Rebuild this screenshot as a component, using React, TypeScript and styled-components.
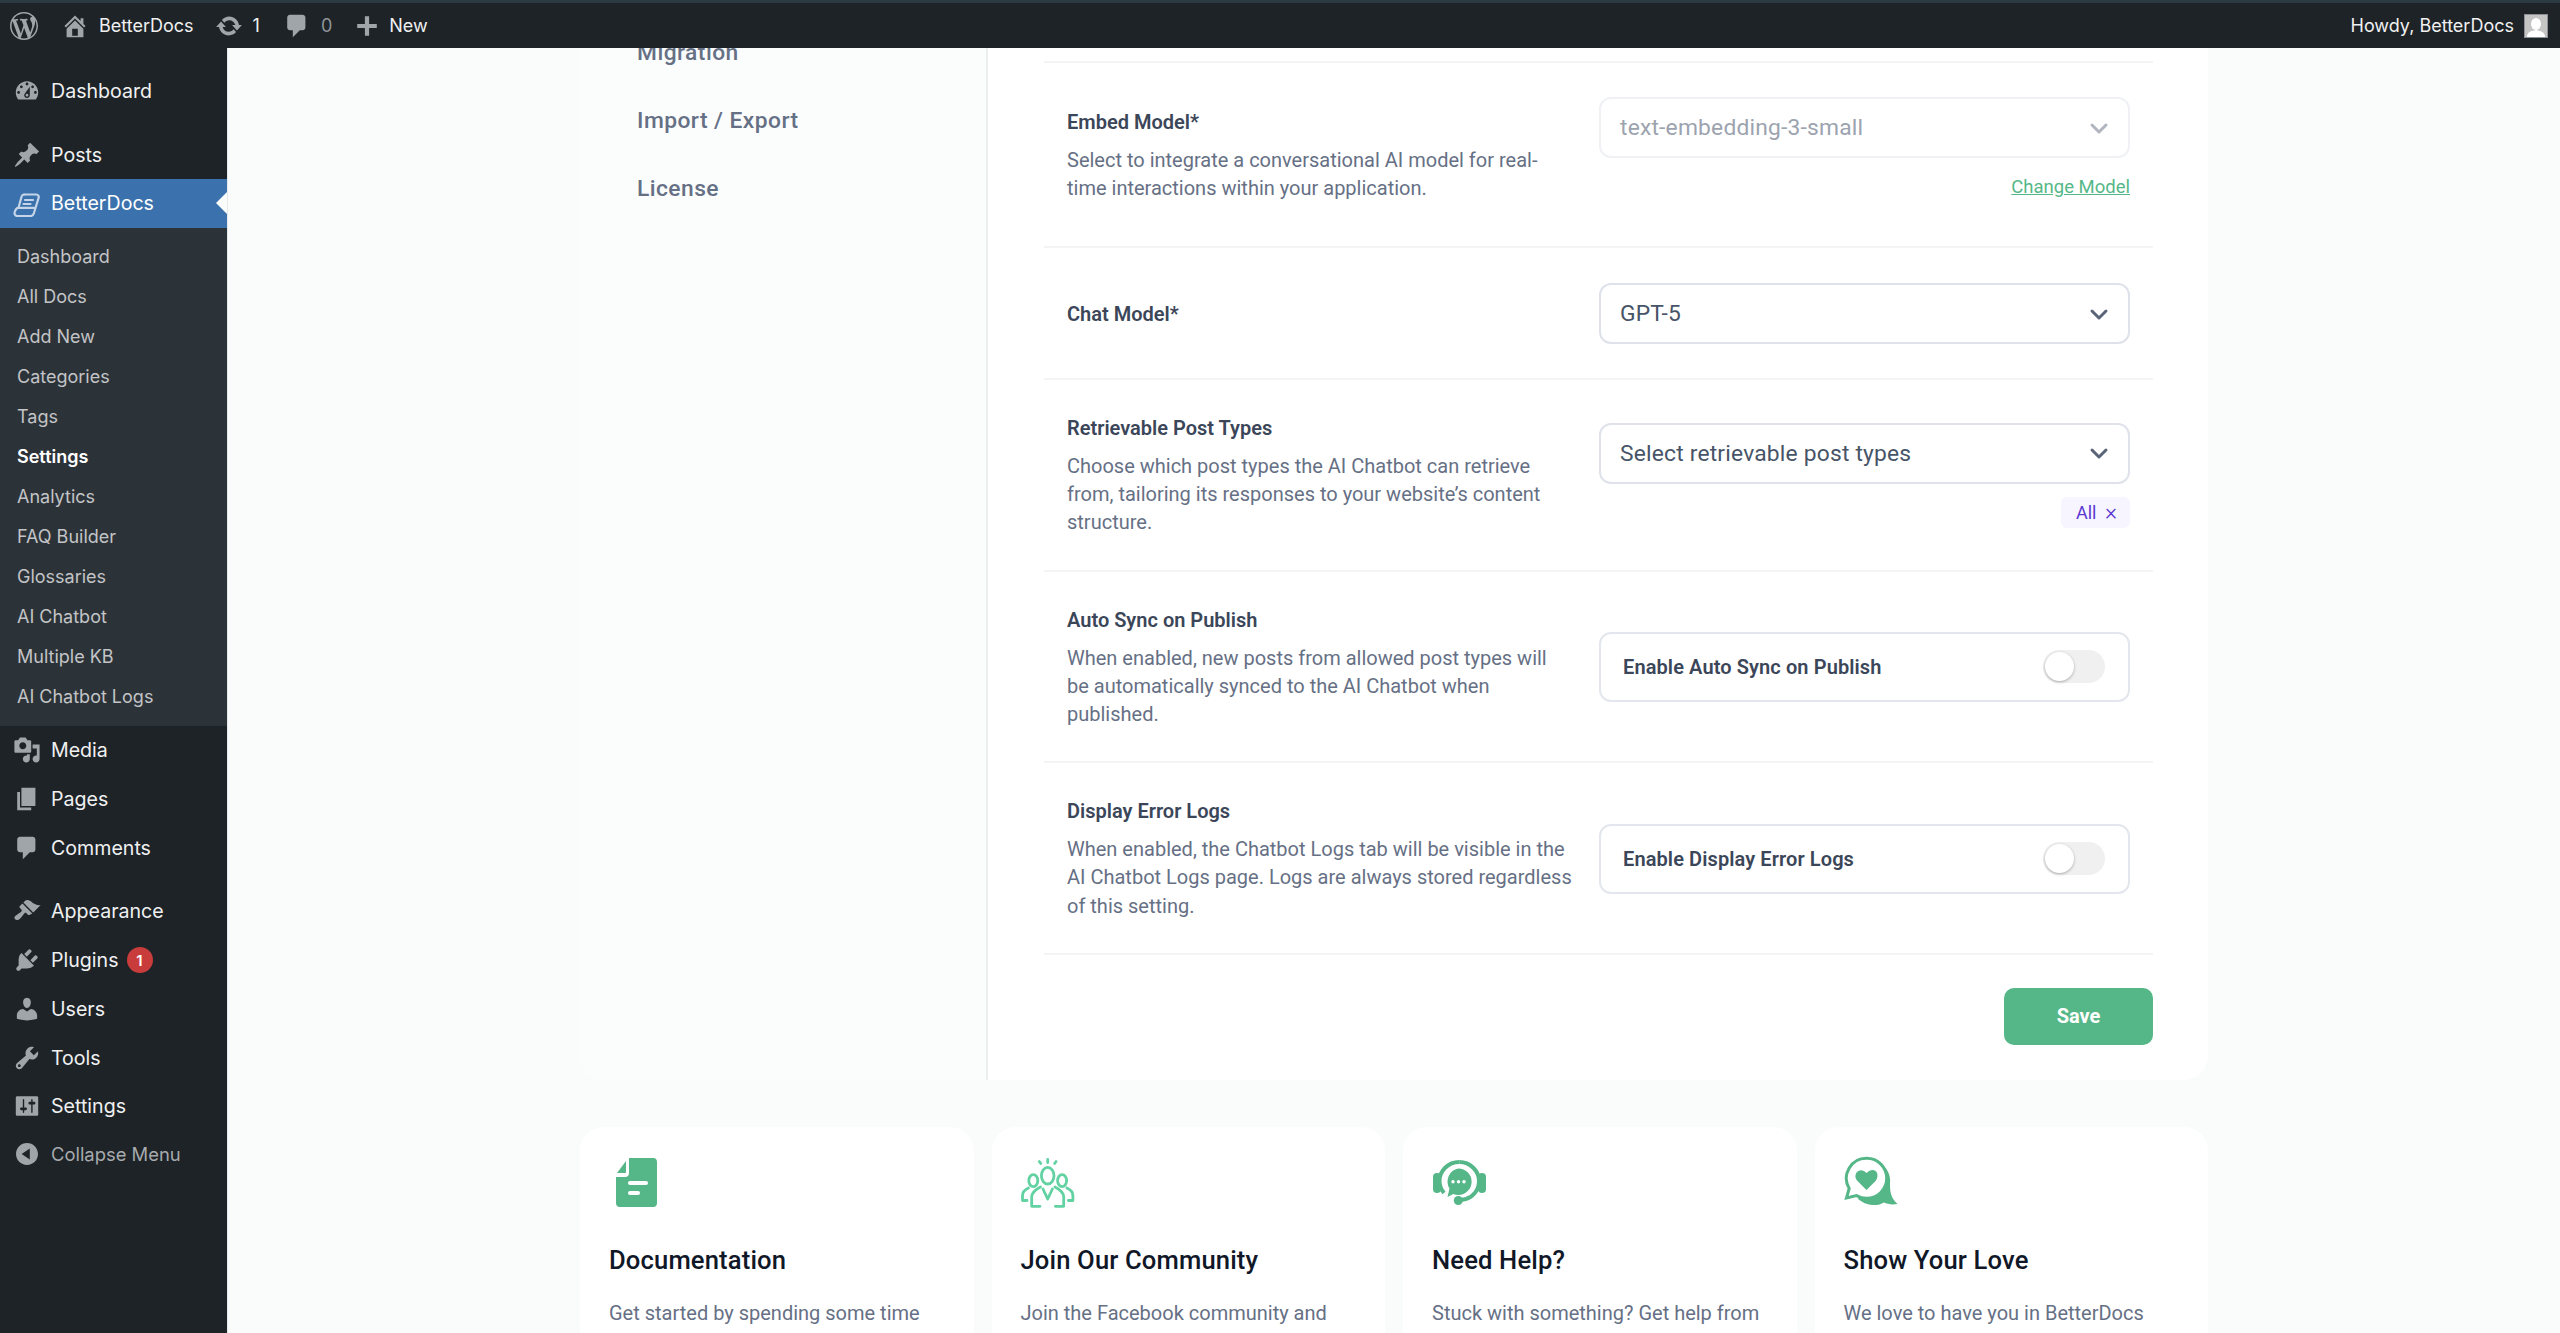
import React from 'react'
import styled, { createGlobalStyle } from 'styled-components'
import type { FC, ReactNode } from 'react'

const WP_FONT = '"Inter", "Liberation Sans", sans-serif'
const UI_FONT = '"Roboto", "Noto Sans", sans-serif'
const GREEN = '#55b788'

const GlobalStyle = createGlobalStyle`
  html, body {
    margin: 0;
    height: 100%;
    overflow: hidden;
    background: #fafcfb;
  }
  * {
    box-sizing: border-box;
  }
`

const Shell = styled.div`
  display: flex;
  flex-direction: column;
  height: 100vh;
  font-family: ${UI_FONT};
`

const AdminBar = styled.header`
  display: flex;
  align-items: center;
  flex: none;
  height: 48px;
  padding: 0 12px 0 10px;
  background: #1d2327;
  border-top: 3px solid #2b3a41;
  font-family: ${WP_FONT};
  font-size: 18px;
  color: #f0f0f1;
  position: relative;
  z-index: 2;
  svg {
    color: #a0a5aa;
  }
`

const BarItem = styled.div<{ $ml: number; $gap?: number; $dim?: boolean }>`
  display: flex;
  align-items: center;
  gap: ${({ $gap }) => $gap ?? 12}px;
  margin-left: ${({ $ml }) => $ml}px;
  color: ${({ $dim }) => ($dim ? '#8f9499' : '#f0f0f1')};
`

const BarSpacer = styled.div`
  flex: 1;
`

const Avatar = styled.div`
  width: 24px;
  height: 24px;
  background: #c4c4c4;
  border: 1px solid #8c8f94;
  overflow: hidden;
  display: flex;
  svg {
    color: #fff;
  }
`

const Body = styled.div`
  display: flex;
  flex: 1;
  min-height: 0;
`

const Sidebar = styled.nav`
  flex: none;
  width: 228px;
  background: #1d2327;
  border-right: 1px solid #e6e9ea;
  padding-top: 18.5px;
  font-family: ${WP_FONT};
`

const MenuItem = styled.div<{ $gapAfter?: boolean; $muted?: boolean; $active?: boolean }>`
  position: relative;
  display: flex;
  align-items: center;
  gap: 10px;
  height: ${({ $muted }) => ($muted ? 47 : 48.75)}px;
  padding-left: 13px;
  font-size: ${({ $muted }) => ($muted ? 18.4 : 19.6)}px;
  margin-bottom: ${({ $gapAfter }) => ($gapAfter ? 15 : 0)}px;
  color: ${({ $muted, $active }) => ($active ? '#fff' : $muted ? '#a7aaad' : '#f0f0f1')};
  background: ${({ $active }) => ($active ? '#3b72ad' : 'transparent')};
  svg {
    flex: none;
    color: ${({ $active }) => ($active ? '#c5d4e8' : '#a0a5aa')};
  }
  ${({ $active }) =>
    $active &&
    `
    &::after {
      content: '';
      position: absolute;
      right: 0;
      top: 50%;
      margin-top: -11px;
      border: 11px solid transparent;
      border-right-color: #fafcfb;
      border-left-width: 0;
    }
  `}
`

const Badge = styled.span`
  display: inline-flex;
  align-items: center;
  justify-content: center;
  width: 26px;
  height: 26px;
  margin-left: -2px;
  border-radius: 50%;
  background: #c93c3c;
  color: #fff;
  font-size: 15px;
  font-weight: 600;
`

const SubMenu = styled.div`
  padding: 9px 0 9px 17px;
  background: #2c3338;
`

const SubItem = styled.div<{ $current?: boolean }>`
  height: 40px;
  line-height: 40px;
  font-size: 18px;
  font-weight: ${({ $current }) => ($current ? 600 : 400)};
  color: ${({ $current }) => ($current ? '#fff' : '#c3c4c7')};
`

const Main = styled.main`
  flex: 1;
  min-width: 0;
  overflow: hidden;
  display: flex;
  flex-direction: column;
  align-items: center;
  background: #fafcfb;
`

const Panel = styled.section`
  display: grid;
  grid-template-columns: 408px 1fr;
  flex: none;
  width: 1628px;
  margin-top: -100px;
  border-radius: 0 0 24px 24px;
  overflow: hidden;
  background: #fff;
`

const SettingsNav = styled.div`
  padding: 71px 0 0 57px;
  background: #fbfdfd;
  border-right: 2px solid #eceef0;
`

const NavLink = styled.div`
  height: 68px;
  line-height: 68px;
  font-size: 22.8px;
  font-weight: 500;
  letter-spacing: 0.45px;
  color: #667085;
`

const SettingsForm = styled.div`
  padding: 113px 55px 35px 56px;
`

const Row = styled.div`
  display: grid;
  grid-template-columns: 510px 531px;
  justify-content: space-between;
  align-items: center;
  min-height: 132px;
  padding: 34px 23px 33px;
  border-top: 2px solid #f2f4f6;
`

const RowEnd = styled.div`
  border-top: 2px solid #f2f4f6;
  display: flex;
  justify-content: flex-end;
  padding-top: 33px;
`

const FieldLabel = styled.div`
  font-size: 20px;
  line-height: 28px;
  font-weight: 600;
  color: #3b4659;
`

const Hint = styled.p`
  margin: 10px 0 0;
  max-width: 505.5px;
  font-size: 20px;
  line-height: 28.2px;
  color: #667085;
`

const Control = styled.div`
  display: flex;
  flex-direction: column;
  align-items: flex-end;
`

const Select = styled.div<{ $disabled?: boolean }>`
  display: flex;
  align-items: center;
  justify-content: space-between;
  width: 100%;
  height: 61px;
  padding: 0 17px 0 19px;
  border: 2px solid ${({ $disabled }) => ($disabled ? '#eff1f4' : '#dfe2ea')};
  border-radius: 12px;
  background: #fff;
  font-size: 22.8px;
  letter-spacing: 0.2px;
  color: ${({ $disabled }) => ($disabled ? '#9ca3af' : '#475467')};
  svg {
    color: ${({ $disabled }) => ($disabled ? '#b0b5c0' : '#5a6478')};
  }
`

const ChangeLink = styled.a`
  margin: 18px 0 15px;
  font-size: 18.5px;
  line-height: 22px;
  color: ${GREEN};
  text-decoration: underline;
`

const Tag = styled.span`
  display: flex;
  align-items: center;
  justify-content: space-between;
  width: 69px;
  height: 31px;
  margin-top: 13px;
  padding: 0 13px 0 15px;
  border-radius: 6px;
  background: #f7f5ff;
  font-size: 18px;
  color: #5b38d0;
`

const TagClose = styled.span`
  font-size: 23px;
  font-weight: 300;
  line-height: 1;
`

const ToggleBox = styled.div`
  display: flex;
  align-items: center;
  justify-content: space-between;
  height: 70px;
  padding: 0 23px 0 22px;
  border: 2px solid #e3e6ec;
  border-radius: 12px;
  font-size: 20px;
  font-weight: 600;
  letter-spacing: 0.1px;
  color: #3b4659;
`

const ToggleTrack = styled.div`
  display: flex;
  align-items: center;
  width: 62px;
  height: 33px;
  padding: 0 2px;
  border-radius: 17px;
  background: #f0f0f0;
`

const ToggleKnob = styled.div`
  width: 29px;
  height: 29px;
  border-radius: 50%;
  background: #fff;
  box-shadow: 0 1px 3px rgba(0, 0, 0, 0.3);
`

const SaveButton = styled.button`
  width: 149px;
  height: 57px;
  border: 0;
  border-radius: 10px;
  background: ${GREEN};
  color: #fff;
  font-family: ${UI_FONT};
  font-size: 20px;
  font-weight: 700;
`

const Cards = styled.div`
  display: grid;
  grid-template-columns: repeat(4, 1fr);
  gap: 18px;
  flex: none;
  width: 1628px;
  margin-top: 47px;
`

const Card = styled.article`
  height: 300px;
  padding: 29px 29px 0;
  border-radius: 24px;
  background: #fff;
`

const CardIcon = styled.div<{ $left: number }>`
  display: flex;
  align-items: center;
  height: 54px;
  padding-left: ${({ $left }) => $left}px;
`

const CardTitle = styled.h3`
  margin: 33px 0 0;
  font-size: 25.6px;
  line-height: 34px;
  font-weight: 500;
  letter-spacing: 0.15px;
  color: #101828;
`

const CardText = styled.p`
  margin: 22px 0 0;
  font-size: 20px;
  line-height: 29px;
  color: #667085;
`

const Dash: FC<{ d: string; size?: number }> = ({ d, size = 28 }) => (
  <svg width={size} height={size} viewBox="0 0 20 20" fill="currentColor">
    <path d={d} />
  </svg>
)

const ICONS = {
  wp: 'M20 10c0-5.51-4.49-10-10-10C4.48 0 0 4.49 0 10c0 5.52 4.48 10 10 10 5.51 0 10-4.48 10-10zM7.78 15.37L4.37 6.22c.55-.02 1.17-.08 1.17-.08.5-.06.44-1.13-.06-1.11 0 0-1.45.11-2.37.11-.18 0-.37 0-.58-.01C4.12 2.69 6.87 1.11 10 1.11c2.33 0 4.45.87 6.05 2.34-.68-.11-1.65.39-1.65 1.58 0 .74.45 1.36.9 2.1.35.61.55 1.36.55 2.46 0 1.49-1.4 5-1.4 5l-3.03-8.37c.54-.02.82-.17.82-.17.5-.05.44-1.25-.06-1.22 0 0-1.44.12-2.38.12-.87 0-2.33-.12-2.33-.12-.5-.03-.56 1.2-.06 1.22l.92.08 1.26 3.41zM17.41 10c.24-.64.74-1.87.43-4.25.7 1.29 1.05 2.71 1.05 4.25 0 3.29-1.73 6.24-4.4 7.78.97-2.59 1.94-5.2 2.92-7.78zM6.1 18.09C3.12 16.65 1.11 13.53 1.11 10c0-1.3.23-2.48.72-3.59C3.25 10.3 4.67 14.2 6.1 18.09zm4.03-6.63l2.58 6.98c-.86.29-1.76.45-2.71.45-.79 0-1.57-.11-2.29-.33.81-2.38 1.62-4.74 2.42-7.1z',
  home: 'M16 8.5l1.53 1.53-1.06 1.06L10 4.62l-6.47 6.47-1.06-1.06L10 2.5l4 4v-2h2v4zm-6-2.46l6 5.99V18H4v-5.97zM12 17v-5H8v5h4z',
  update: 'M10.2 3.28c3.53 0 6.43 2.61 6.92 6h2.08l-3.5 4-3.5-4h2.32c-.45-1.97-2.21-3.45-4.32-3.45-1.45 0-2.73.71-3.54 1.78L4.95 5.66C6.23 4.2 8.11 3.28 10.2 3.28zm-.4 13.44c-3.52 0-6.43-2.61-6.92-6H.8l3.5-4c1.17 1.33 2.33 2.67 3.5 4H5.48c.45 1.97 2.21 3.45 4.32 3.45 1.45 0 2.73-.71 3.54-1.78l1.71 1.95c-1.28 1.46-3.15 2.38-5.25 2.38z',
  comment: 'M5 2h9c1.1 0 2 .9 2 2v7c0 1.1-.9 2-2 2h-2l-5 5v-5H5c-1.1 0-2-.9-2-2V4c0-1.1.9-2 2-2z',
  plus: 'M17 8.5v3h-5.5V17h-3v-5.5H3v-3h5.5V3h3v5.5H17z',
  dashboard: 'M3.76 16h12.48c1.1-1.37 1.76-3.11 1.76-5 0-4.42-3.58-8-8-8s-8 3.58-8 8c0 1.89.66 3.63 1.76 5zM10 4c.55 0 1 .45 1 1s-.45 1-1 1-1-.45-1-1 .45-1 1-1zM6 6c.55 0 1 .45 1 1s-.45 1-1 1-1-.45-1-1 .45-1 1-1zm8 0c.55 0 1 .45 1 1s-.45 1-1 1-1-.45-1-1 .45-1 1-1zm-5.37 5.55L12 7v6c0 1.1-.9 2-2 2s-2-.9-2-2c0-.57.24-1.08.63-1.45zM4 10c.55 0 1 .45 1 1s-.45 1-1 1-1-.45-1-1 .45-1 1-1zm12 0c.55 0 1 .45 1 1s-.45 1-1 1-1-.45-1-1 .45-1 1-1zm-5 3c0-.55-.45-1-1-1s-1 .45-1 1 .45 1 1 1 1-.45 1-1z',
  posts: 'M10.44 3.02l1.82-1.82 6.36 6.35-1.83 1.82c-1.05-.68-2.48-.57-3.41.36l-.75.75c-.92.93-1.04 2.35-.35 3.41l-1.83 1.82-2.41-2.41-2.8 2.79c-.42.42-3.38 2.71-3.8 2.29s1.86-3.39 2.28-3.81l2.79-2.79L4.1 9.36l1.83-1.82c1.05.69 2.48.57 3.4-.36l.75-.75c.93-.92 1.05-2.35.36-3.41z',
  media: 'M13 11V4c0-.55-.45-1-1-1h-1.67L9 1H5L3.67 3H2c-.55 0-1 .45-1 1v7c0 .55.45 1 1 1h10c.55 0 1-.45 1-1zM7 4.5c1.38 0 2.5 1.12 2.5 2.5S8.38 9.5 7 9.5 4.5 8.38 4.5 7 5.62 4.5 7 4.5zM14 6h5v10.5c0 1.38-1.12 2.5-2.5 2.5S14 17.88 14 16.5s1.12-2.5 2.5-2.5c.17 0 .34.02.5.05V9h-3V6zm-4 8.05V13h2v3.5c0 1.38-1.12 2.5-2.5 2.5S7 17.88 7 16.5 8.12 14 9.5 14c.17 0 .34.02.5.05z',
  pages: 'M6 15V2h10v13H6zm-1 1h8v2H3V5h2v11z',
  appearance: 'M14.48 11.06L7.41 3.99l1.5-1.5c.5-.56 2.3-.47 3.51.32 1.21.8 1.43 1.28 2.91 2.1 1.18.64 2.45 1.26 4.45.85zm-.71.71L6.7 4.7 4.93 6.47c-.39.39-.39 1.02 0 1.41l1.06 1.06c.39.39.39 1.03 0 1.42-.6.6-1.43 1.11-2.21 1.69-.35.26-.7.53-1.01.84C1.43 13.23.4 14.8 1.57 15.98c1.17 1.17 2.75.14 4.08-1.19.31-.31.58-.66.85-1.01.58-.78 1.09-1.61 1.69-2.21.39-.39 1.02-.39 1.41 0l1.06 1.06c.39.39 1.02.39 1.41 0z',
  plugins: 'M13.11 4.36L9.87 7.6 8 5.73l3.24-3.24c.35-.34 1.05-.2 1.56.32.52.51.66 1.21.31 1.55zm-8 1.77l.91-1.12 9.01 9.01-1.19.84c-.71.71-2.63 1.16-3.82 1.16H6.14L4.9 17.26c-.59.59-1.54.59-2.12 0-.59-.58-.59-1.53 0-2.12l1.24-1.24v-3.88c0-1.13.4-3.19 1.09-3.89zm7.26 3.97l3.24-3.24c.34-.35 1.04-.21 1.55.31.52.51.66 1.21.31 1.55l-3.24 3.25z',
  users: 'M10 9.25c-2.27 0-2.73-3.44-2.73-3.44C7 4.02 7.82 2 9.97 2c2.16 0 2.98 2.02 2.71 3.81 0 0-.41 3.44-2.68 3.44zm0 2.57L12.72 10c2.39 0 4.52 2.33 4.52 4.53v2.49s-3.65 1.13-7.24 1.13c-3.65 0-7.24-1.13-7.24-1.13v-2.49c0-2.25 1.94-4.48 4.47-4.48z',
  tools: 'M16.68 9.77c-1.34 1.34-3.3 1.67-4.95.99l-5.41 6.52c-.99.99-2.59.99-3.58 0s-.99-2.59 0-3.57l6.52-5.42c-.68-1.65-.35-3.61.99-4.95 1.28-1.28 3.12-1.62 4.72-1.06l-2.89 2.89 2.82 2.82 2.86-2.87c.53 1.58.18 3.39-1.08 4.65zM3.81 16.21c.4.39 1.04.39 1.43 0 .4-.4.4-1.04 0-1.43-.39-.4-1.03-.4-1.43 0-.39.39-.39 1.03 0 1.43z',
  settings: 'M18 16V4c0-.55-.45-1-1-1H3c-.55 0-1 .45-1 1v12c0 .55.45 1 1 1h14c.55 0 1-.45 1-1zM8 11h1c.55 0 1 .45 1 1s-.45 1-1 1H8v1.5c0 .28-.22.5-.5.5s-.5-.22-.5-.5V13H6c-.55 0-1-.45-1-1s.45-1 1-1h1V5.5c0-.28.22-.5.5-.5s.5.22.5.5V11zm5-2h-1c-.55 0-1-.45-1-1s.45-1 1-1h1V5.5c0-.28.22-.5.5-.5s.5.22.5.5V7h1c.55 0 1 .45 1 1s-.45 1-1 1h-1v5.5c0 .28-.22.5-.5.5s-.5-.22-.5-.5V9z',
  collapse: 'M10 2.16c4.33 0 7.84 3.51 7.84 7.84s-3.51 7.84-7.84 7.84S2.16 14.33 2.16 10 5.71 2.16 10 2.16zm2 11.72V6.12L6.18 9.97z',
}

const BetterDocsIcon = () => (
  <svg width="28" height="28" viewBox="0 0 28 28" fill="none" stroke="currentColor" strokeWidth="2.2" strokeLinecap="round">
    <path d="M11 5.500h12.300a2.500 2.500 0 0 1 2.300 3.400l-4.800 15.600A3.500 3.500 0 0 1 17.400 27H4.500a3 3 0 0 1-2.700-4.300l1-2.200a3 3 0 0 1 2.700-1.700H21" />
    <path d="M11 5.500a2.500 2.500 0 0 0-2.300 1.800L5.500 18.800" />
    <path d="M12 11h8M10.500 15h7" />
  </svg>
)

const Chevron = () => (
  <svg width="24" height="24" viewBox="0 0 24 24" fill="none" stroke="currentColor" strokeWidth="3" strokeLinecap="round" strokeLinejoin="round">
    <path d="M5 9l7 7 7-7" />
  </svg>
)

const DocIcon = () => (
  <svg width="41" height="49" viewBox="0 0 41 49" fill={GREEN}>
    <path d="M13 0h24a4 4 0 0 1 4 4v41a4 4 0 0 1-4 4H4a4 4 0 0 1-4-4V19h9a4 4 0 0 0 4-4z" />
    <path d="M10 3v11a1 1 0 0 1-1 1H1z" />
    <rect x="12" y="23" width="20" height="4" rx="2" fill="#fff" />
    <rect x="12" y="33" width="12" height="4" rx="2" fill="#fff" />
  </svg>
)

const CommunityIcon = () => (
  <svg width="54" height="50" viewBox="0 0 54 50" fill="none" stroke="#62d2a2" strokeWidth="2.800" strokeLinecap="round" strokeLinejoin="round">
    <path d="M26.700 1.500v3M18.300 3.500l1.500 2M35.100 3.500l-1.500 2" />
    <ellipse cx="26.700" cy="17.700" rx="6.300" ry="8.300" />
    <ellipse cx="12.300" cy="22.700" rx="4.500" ry="6" />
    <ellipse cx="41.100" cy="22.700" rx="4.500" ry="6" />
    <path d="M19.500 29c-4 2-8.800 5-8.800 10v9.300H19M33.900 29c4 2 8.800 5 8.800 10v9.300h-8.300" />
    <path d="M22 31l4.700 10 4.700-10" />
    <path d="M7.500 30C4 31.500 1.500 34 1.500 38v4.500H6M45.900 30c3.500 1.500 6 4 6 8v4.500h-4.500" />
  </svg>
)

const HelpIcon = () => (
  <svg width="55" height="46" viewBox="0 0 55 46" fill="none">
    <path d="M27.300 2C16 2 7.500 11 7.500 21c0 5 2 9 4.500 12" stroke={GREEN} strokeWidth="4" />
    <path d="M27.300 2c11 0 19.700 9 19.700 19 0 9-6 16-13 18l-5 1" stroke={GREEN} strokeWidth="4" />
    <rect x="1" y="13" width="8" height="20" rx="4" fill={GREEN} />
    <rect x="46" y="13" width="8" height="20" rx="4" fill={GREEN} />
    <circle cx="26.300" cy="40.500" r="4.500" fill={GREEN} />
    <path d="M26.300 8.400a13.300 13.300 0 1 1 0 26.600c-1.800 0-3.500-.4-5-1L15.500 37l2-8.500A13.300 13.300 0 0 1 26.300 8.400z" fill={GREEN} />
    <circle cx="21" cy="21.700" r="1.700" fill="#fff" />
    <circle cx="26.500" cy="21.700" r="1.700" fill="#fff" />
    <circle cx="32" cy="21.700" r="1.700" fill="#fff" />
  </svg>
)

const LoveIcon = () => (
  <svg width="54" height="54" viewBox="0 0 54 54">
    <path d="M32 6c12 4 15 14 14 22 0 8 1 14 7.500 20-5.500 1-10.500 0-13.500-1.500-6 3.500-16 4.500-26-3.500z" fill={GREEN} />
    <path d="M22.700 2.300a20 20 0 0 1 0 40c-3.700 0-7.200-1-10.200-2.700L2.500 42l2.700-9.500A20 20 0 0 1 22.700 2.300z" fill="#fff" stroke={GREEN} strokeWidth="3" />
    <path d="M22.500 34L13 24.500C8 18 16 10 22.500 17c6.500-7 14.500-1 9.500 7.500z" fill={GREEN} />
  </svg>
)

const AvatarFigure = () => (
  <svg width="22" height="22" viewBox="0 0 22 22" fill="currentColor">
    <ellipse cx="11" cy="9" rx="5" ry="6" />
    <path d="M2 22c0-5 4-6 9-7 5 1 9 2 9 7z" />
  </svg>
)

const SUB_ITEMS = ['Dashboard', 'All Docs', 'Add New', 'Categories', 'Tags', 'Settings', 'Analytics', 'FAQ Builder', 'Glossaries', 'AI Chatbot', 'Multiple KB', 'AI Chatbot Logs']

const CARDS: Array<{ title: string; text: string; left: number; icon: ReactNode }> = [
  { title: 'Documentation', text: 'Get started by spending some time with the documentation to get familiar with BetterDocs.', left: 7, icon: <DocIcon /> },
  { title: 'Join Our Community', text: 'Join the Facebook community and discuss with fellow developers and users.', left: 0, icon: <CommunityIcon /> },
  { title: 'Need Help?', text: 'Stuck with something? Get help from live chat or support ticket.', left: 0, icon: <HelpIcon /> },
  { title: 'Show Your Love', text: 'We love to have you in BetterDocs family. Show your love with a rating.', left: 0, icon: <LoveIcon /> },
]

const App: FC = () => (
  <Shell>
    <GlobalStyle />
    <AdminBar>
      <Dash d={ICONS.wp} />
      <BarItem $ml={23} $gap={10}><Dash d={ICONS.home} />BetterDocs</BarItem>
      <BarItem $ml={21} $gap={10}><Dash d={ICONS.update} />1</BarItem>
      <BarItem $ml={23} $gap={10} $dim><Dash d={ICONS.comment} />0</BarItem>
      <BarItem $ml={21} $gap={8}><Dash d={ICONS.plus} />New</BarItem>
      <BarSpacer />
      <BarItem $ml={0} $gap={10}>
        Howdy, BetterDocs
        <Avatar><AvatarFigure /></Avatar>
      </BarItem>
    </AdminBar>
    <Body>
      <Sidebar>
        <MenuItem $gapAfter><Dash d={ICONS.dashboard} />Dashboard</MenuItem>
        <MenuItem><Dash d={ICONS.posts} />Posts</MenuItem>
        <MenuItem $active><BetterDocsIcon />BetterDocs</MenuItem>
        <SubMenu>
          {SUB_ITEMS.map((item, i) => (
            <SubItem key={i} $current={i === 5}>{item}</SubItem>
          ))}
        </SubMenu>
        <MenuItem><Dash d={ICONS.media} />Media</MenuItem>
        <MenuItem><Dash d={ICONS.pages} />Pages</MenuItem>
        <MenuItem $gapAfter><Dash d={ICONS.comment} />Comments</MenuItem>
        <MenuItem><Dash d={ICONS.appearance} />Appearance</MenuItem>
        <MenuItem><Dash d={ICONS.plugins} />Plugins<Badge>1</Badge></MenuItem>
        <MenuItem><Dash d={ICONS.users} />Users</MenuItem>
        <MenuItem><Dash d={ICONS.tools} />Tools</MenuItem>
        <MenuItem><Dash d={ICONS.settings} />Settings</MenuItem>
        <MenuItem $muted><Dash d={ICONS.collapse} />Collapse Menu</MenuItem>
      </Sidebar>
      <Main>
        <Panel>
          <SettingsNav>
            <NavLink>Migration</NavLink>
            <NavLink>Import / Export</NavLink>
            <NavLink>License</NavLink>
          </SettingsNav>
          <SettingsForm>
            <Row>
              <div>
                <FieldLabel>Embed Model*</FieldLabel>
                <Hint>Select to integrate a conversational AI model for real-time interactions within your application.</Hint>
              </div>
              <Control>
                <Select $disabled>text-embedding-3-small<Chevron /></Select>
                <ChangeLink>Change Model</ChangeLink>
              </Control>
            </Row>
            <Row>
              <FieldLabel>Chat Model*</FieldLabel>
              <Control>
                <Select>GPT-5<Chevron /></Select>
              </Control>
            </Row>
            <Row>
              <div>
                <FieldLabel>Retrievable Post Types</FieldLabel>
                <Hint>Choose which post types the AI Chatbot can retrieve from, tailoring its responses to your website’s content structure.</Hint>
              </div>
              <Control>
                <Select>Select retrievable post types<Chevron /></Select>
                <Tag>All<TagClose>×</TagClose></Tag>
              </Control>
            </Row>
            <Row>
              <div>
                <FieldLabel>Auto Sync on Publish</FieldLabel>
                <Hint>When enabled, new posts from allowed post types will be automatically synced to the AI Chatbot when published.</Hint>
              </div>
              <ToggleBox>
                Enable Auto Sync on Publish
                <ToggleTrack><ToggleKnob /></ToggleTrack>
              </ToggleBox>
            </Row>
            <Row>
              <div>
                <FieldLabel>Display Error Logs</FieldLabel>
                <Hint>When enabled, the Chatbot Logs tab will be visible in the AI Chatbot Logs page. Logs are always stored regardless of this setting.</Hint>
              </div>
              <ToggleBox>
                Enable Display Error Logs
                <ToggleTrack><ToggleKnob /></ToggleTrack>
              </ToggleBox>
            </Row>
            <RowEnd>
              <SaveButton>Save</SaveButton>
            </RowEnd>
          </SettingsForm>
        </Panel>
        <Cards>
          {CARDS.map((card) => (
            <Card key={card.title}>
              <CardIcon $left={card.left}>{card.icon}</CardIcon>
              <CardTitle>{card.title}</CardTitle>
              <CardText>{card.text}</CardText>
            </Card>
          ))}
        </Cards>
      </Main>
    </Body>
  </Shell>
)

export default App
